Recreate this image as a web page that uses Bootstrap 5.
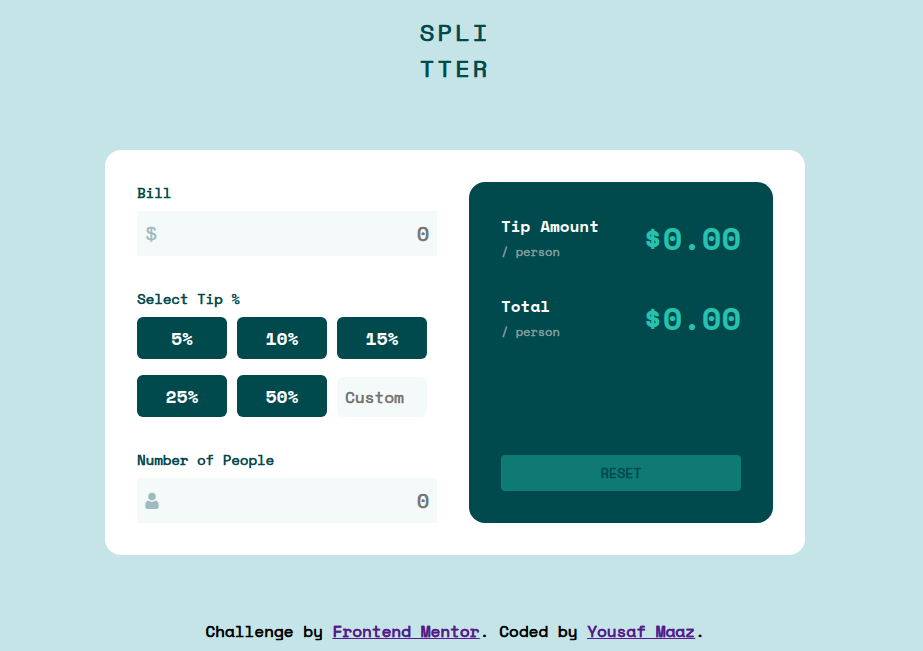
<!DOCTYPE html>
<html lang="en">
<head>
<meta charset="utf-8">
<meta name="viewport" content="width=device-width, initial-scale=1">
<title>Splitter</title>
<link href="https://cdn.jsdelivr.net/npm/bootstrap@5.3.0/dist/css/bootstrap.min.css" rel="stylesheet">
<style>
body{background:#c5e4e7;font-family:"Space Mono","Liberation Mono",monospace;font-weight:400;color:#000;width:910px;height:651px;overflow:hidden}
.logo,.field-label,.field-box input,.custom,.sum-unit,.reset,.credit{-webkit-text-stroke:.022em currentColor;text-shadow:.022em 0 0 currentColor}
.logo{font-size:24px;line-height:36px;letter-spacing:3px;color:#00494d;padding-top:14px;height:150px;width:71px}
.calc{width:700px;height:405px;border-radius:16px;padding:32px}
.inputs{width:300px}
.field-label{font-size:14px;line-height:21px;color:#00494d;display:block}
.tip-title{margin-top:32px}
.field-box{height:45px;background:#f4fafa;padding:0 8px 0 9px}
.field-box input{border:0;background:none;width:100%;text-align:right;font-size:20px;font-weight:400;color:#757575;padding:0;outline:0}
.field-box input::placeholder,.custom::placeholder{color:#757575;opacity:1}
.dollar{font-family:"Liberation Sans",sans-serif;font-size:18.5px;-webkit-text-stroke:.5px #9ebbbd;color:#9ebbbd;line-height:45px}
.person{margin:0 0 0 -1px;flex:none}
.tips{display:grid;grid-template-columns:repeat(3,90px);column-gap:10px;row-gap:16px;margin:8px 0 32px}
.tip{height:42px;border:0;border-radius:6px;background:#00494d;color:#fff;font-size:18px;font-weight:700;padding:0;line-height:40px}
.custom{width:90px;height:40px;margin-top:2px;border:0;border-radius:6px;background:#f4fafa;font-size:16px;font-weight:400;padding:0 8px;color:#757575}
.result{width:304px;height:341px;border-radius:16px;background:#00494d;padding:32px}
.sum{height:80px}
.sum-name{font-size:16px;line-height:24px;color:#fff;font-weight:700}
.sum-unit{font-size:12px;line-height:18px;color:#7f9d9f;padding-top:5px}
.sum-value{font-size:32px;line-height:48px;color:#26c2ae;font-weight:700}
.reset{height:36px;border:0;border-radius:4px;background:#0f7a73;color:#00494d;font-size:13.333px;font-weight:400;padding:0}
.credit{font-size:16px;line-height:24px;margin-top:64px;white-space:nowrap}
.credit a{color:#551a8b}
</style>
<script src="https://cdn.jsdelivr.net/npm/bootstrap@5.3.0/dist/js/bootstrap.bundle.min.js"></script>
</head>
<body>
<header class="logo mx-auto">SPLI<br>TTER</header>
<main class="calc bg-white mx-auto d-flex justify-content-between">
  <form class="inputs">
    <label class="field-label mb-2" for="bill">Bill</label>
    <div class="field-box d-flex align-items-center">
      <span class="dollar">$</span><input id="bill" type="text" placeholder="0">
    </div>
    <div class="field-label tip-title">Select Tip %</div>
    <div class="tips">
      <button type="button" class="tip">5%</button>
      <button type="button" class="tip">10%</button>
      <button type="button" class="tip">15%</button>
      <button type="button" class="tip">25%</button>
      <button type="button" class="tip">50%</button>
      <input class="custom" type="text" placeholder="Custom" aria-label="Custom tip">
    </div>
    <label class="field-label mb-2" for="people">Number of People</label>
    <div class="field-box d-flex align-items-center">
      <svg class="person" width="14" height="17" viewBox="0 0 14 17" fill="#9ebbbd"><circle cx="7" cy="4.600" r="3.800"/><path d="M3.200 8.600C4.200 9.400 5.500 9.800 7 9.800s2.800-.4 3.800-1.200c1.900.4 2.900 2 2.900 4.300v1.900c0 1.300-.8 2.200-2 2.200H2.300C1.100 17 .3 16.100.3 14.800v-1.900c0-2.300 1-3.900 2.900-4.300z"/></svg>
      <input id="people" type="text" placeholder="0">
    </div>
  </form>
  <section class="result d-flex flex-column">
    <div class="sum d-flex justify-content-between">
      <div><div class="sum-name">Tip Amount</div><div class="sum-unit">/ person</div></div>
      <div class="sum-value">$0.00</div>
    </div>
    <div class="sum d-flex justify-content-between">
      <div><div class="sum-name">Total</div><div class="sum-unit">/ person</div></div>
      <div class="sum-value">$0.00</div>
    </div>
    <button type="button" class="reset w-100 mt-auto">RESET</button>
  </section>
</main>
<footer class="credit text-center">Challenge by <a href="#">Frontend Mentor</a>. Coded by <a href="#">Yousaf Maaz</a>.</footer>
</body>
</html>
